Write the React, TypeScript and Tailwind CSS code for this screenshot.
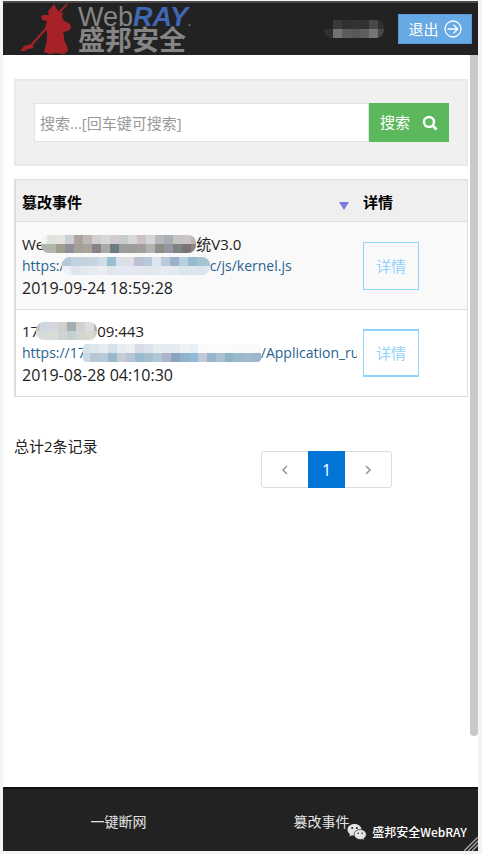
import React from "react";

const BODY_FONT = "font-['Open_Sans','Noto_Sans_CJK_SC',sans-serif]";

const CELL = 9;

type MosaicProps = {
  id: string;
  width: number;
  height: number;
  shift?: number;
  rows: string[][];
  radius?: number;
  className?: string;
};

/** Pixelated block that hides private text. */
function Mosaic({ id, width, height, shift = 0, rows, radius = 8, className = "" }: MosaicProps) {
  return (
    <svg
      width={width}
      height={height}
      className={`relative block shrink-0 ${className}`}
      aria-hidden="true"
      shapeRendering="crispEdges"
    >
      <clipPath id={id}>
        <rect width={width} height={height} rx={radius} />
      </clipPath>
      <g clipPath={`url(#${id})`}>
        {rows.map((row, y) =>
          row.map((fill, x) => (
            <rect key={`${x}-${y}`} x={x * CELL - shift} y={y * CELL} width={CELL} height={CELL + 1} fill={fill} />
          )),
        )}
      </g>
    </svg>
  );
}

const userRows = [
  ["#222222", "#3a3a3a", "#303030", "#333333", "#313131", "#484848", "#303030"],
  ["#303030", "#717171", "#5c5c5c", "#585858", "#5e5e5e", "#757575", "#484848"],
];

const titleRows = [
  ["#f0f3ef", "#dde4dc", "#e4e4e2", "#cccfd6", "#b0a29f", "#bdb9b7", "#d2d0cf", "#d5d8d7", "#d1cad2", "#c8cdcb", "#d5d8d6", "#cec1c8", "#d3d6d5", "#b6b8c0", "#a8b0b2", "#c5c3c6", "#cbc5c6", "#bdb5b5"],
  ["#aeb3ae", "#b2b5ac", "#9f9f90", "#8f9099", "#a5a098", "#a8a498", "#88838a", "#aaa8a9", "#6c7a82", "#9d9d9e", "#9b9b9c", "#a09f98", "#b3b3b6", "#8e8e85", "#9697a2", "#7c8384", "#7b7373", "#8b8585"],
];

const urlRows = [
  ["#b5c8d8", "#c2d3df", "#c4d2dd", "#c7d3df", "#d0dde7", "#9bbfd2", "#d5e0e8", "#dddde3", "#bdbfd4", "#b6c8d9", "#dfe5ec", "#b9cbdb", "#9bb0c9", "#b7d0df", "#98bace", "#a6c3d2", "#aac2d0", "#c5d6e0"],
  ["#edf0f5", "#dfe5ee", "#e4e8ef", "#e6ebf1", "#eaedf2", "#e1e6ed", "#e2e9f0", "#e3e9f0", "#e6e9ef", "#e0e6ec", "#e3e7ee", "#e7eaf0", "#e2e9ef", "#dde5ec", "#dce6ee", "#d9e4ed", "#dfe7ed", "#e7edf1"],
];

const ipRows = [
  ["#c3c7c9", "#d0d6df", "#d4d7e1", "#d0d0cf", "#a3b0b3", "#d6d0cd", "#dedde1", "#b0afae"],
  ["#d9dddc", "#d6dcd8", "#d8ddd9", "#cfd3d2", "#c2cfcd", "#cfd6d5", "#d7d9cf", "#cecfcb"],
];

const longUrlRows = [
  ["#d6e3ea", "#dfe7ee", "#e7ecf1", "#d6e1ea", "#e8edf1", "#edf0f3", "#d5dce8", "#dae2eb", "#e8edf1", "#e4ecf2", "#e7ebf3", "#f0f2f6", "#e9f0f5", "#f8fafb", "#fafbfc", "#fafbfb", "#fbfbfb", "#fafafa", "#fafafa", "#fafafa"],
  ["#c8d9e2", "#b9c4d7", "#b8cad9", "#96b9cf", "#c7cbd6", "#b6c3d3", "#9abbd0", "#a4bed0", "#b0c6d6", "#abb6cb", "#8ba4c1", "#90b2cd", "#90bad6", "#c3c9d7", "#99b5cb", "#a8c0d1", "#8fb4c6", "#98b9ce", "#a0bad0", "#9eb5cf"],
];

function Warrior() {
  return (
    <svg width="52" height="52" viewBox="0 0 52 52" className="shrink-0" aria-hidden="true" fill="#a62226">
      <path d="M47 0 48 1 40 10 38 9Z" />
      <path d="M34 1 36 5 39 9 43 10 42 14 44 18 50 21 51 25 48 28 43 29 44 33 44 37 47 43 48 48 44 51 36 50 30 51 24 49 26 42 27 36 27 29 25 25 27 18 22 17 21 13 24 12 29 12 28 8 31 5Z" />
      <path d="m26 24 1 2-14 16v3l-5 1-3 2H0l4-5 7-2Z" />
    </svg>
  );
}

function ExitIcon() {
  return (
    <svg width="18" height="18" viewBox="0 0 18 18" fill="none" stroke="white" strokeWidth="1.3" aria-hidden="true">
      <circle cx="9" cy="9" r="8" />
      <path d="M3.5 9h10M9.5 4.8 13.7 9l-4.2 4.2" />
    </svg>
  );
}

function SearchIcon() {
  return (
    <svg width="16" height="16" viewBox="0 0 16 16" fill="none" stroke="white" strokeWidth="2.4" aria-hidden="true">
      <circle cx="7" cy="7" r="5" />
      <path d="m10.6 10.6 4 4" strokeWidth="2.8" />
    </svg>
  );
}

function WeChatIcon() {
  return (
    <svg width="20" height="18" viewBox="0 0 20 18" fill="#e4e4e4" aria-hidden="true">
      <path d="M7.5 1C3.4 1 .5 3.6.5 6.8c0 1.9 1 3.4 2.5 4.5l-.7 2.2 2.6-1.3c.8.2 1.6.4 2.6.4 4.1 0 7-2.6 7-5.8S11.6 1 7.5 1Z" />
      <path
        d="M13.2 6.5c-3.3 0-6 2.2-6 5s2.7 5 6 5c.7 0 1.4-.1 2-.3l2.2 1.2-.6-1.9c1.5-.9 2.5-2.3 2.5-4 0-2.8-2.8-5-6.1-5Z"
        stroke="#222"
        strokeWidth=".7"
      />
      <g fill="#222">
        <circle cx="5.2" cy="5" r="1" />
        <circle cx="9.8" cy="5" r="1" />
        <circle cx="11.2" cy="10.2" r=".8" />
        <circle cx="15.2" cy="10.2" r=".8" />
      </g>
    </svg>
  );
}

function Chevron({ d }: { d: string }) {
  return (
    <svg width="8" height="10" viewBox="0 0 8 10" fill="none" stroke="#999" strokeWidth="1.6" aria-hidden="true">
      <path d={d} />
    </svg>
  );
}

function DetailButton({ thick = false }: { thick?: boolean }) {
  return (
    <button
      type="button"
      className={`block h-12 w-14 border-[#8bd6fb] text-[15px] text-[#8fd2fd] ${thick ? "border-x border-y-2" : "border"}`}
    >
      详情
    </button>
  );
}

export default function App() {
  return (
    <div className={`flex min-h-screen flex-col bg-[#f4f4f4] pt-px pr-1 pb-[3px] pl-[3px] ${BODY_FONT} text-[#222]`}>
      <div className="relative flex flex-1 flex-col bg-white">
        <header className="flex h-[54px] items-center border-t-2 border-[#4a4a4a] bg-[#222] pr-[6px] pl-[17px]">
          <Warrior />
          <div className="ml-[6px] font-['Liberation_Sans','Noto_Sans_CJK_SC',sans-serif] font-bold whitespace-nowrap text-[#858585]">
            <div className="flex items-end text-[27px] leading-6">
              <span className="font-normal">Web</span>
              <span className="text-[#4066b4] italic">RAY</span>
              <span className="text-[10px] leading-3">.</span>
            </div>
            <div className="text-[27px] leading-6">盛邦安全</div>
          </div>
          <div className="ml-auto">
            <Mosaic id="user" width={60} height={18} rows={userRows} />
          </div>
          <button
            type="button"
            className="ml-[14px] flex h-[30px] w-[74px] shrink-0 items-center justify-center gap-[5px] border border-[#5b9bd5] bg-[#67a9e4] text-[15px] text-white"
          >
            退出
            <ExitIcon />
          </button>
        </header>

        <main className="flex-1 pt-6 pr-[10px] pl-[11px]">
          <form
            className="flex border-2 border-[#e9e9e9] bg-[#f0f0f0] py-[22px] pr-[17px] pl-[18px]"
            onSubmit={(e) => e.preventDefault()}
          >
            <input
              type="search"
              aria-label="搜索"
              placeholder="搜索...[回车键可搜索]"
              className="h-[39px] min-w-0 flex-1 border border-[#e3e3e3] bg-white px-[5px] text-[15px] outline-none placeholder:text-[#999]"
            />
            <button
              type="submit"
              className="flex h-[39px] w-20 items-center justify-center gap-3 bg-[#5cb85c] text-[15px] text-white"
            >
              搜索
              <SearchIcon />
            </button>
          </form>

          <table className="mt-[13px] w-full table-fixed border-separate border-spacing-0 border border-l-2 border-[#dedede]">
            <colgroup>
              <col />
              <col className="w-[110px]" />
            </colgroup>
            <thead>
              <tr className="h-[42px] bg-[#efefef] text-left text-[15px] text-black">
                <th className="border-b border-[#dedede] pt-[3px] pr-2 pl-[6px]">
                  <div className="flex items-center justify-between">
                    篡改事件
                    <svg width="10" height="8" viewBox="0 0 10 8" className="mt-2" aria-hidden="true">
                      <path d="M0 0h10L5 8Z" fill="#7b7be0" />
                    </svg>
                  </div>
                </th>
                <th className="border-b border-[#dedede] pt-[3px] pl-[6px]">详情</th>
              </tr>
            </thead>
            <tbody className="text-[15px] leading-[22px] whitespace-nowrap">
              <tr className="h-[88px] bg-[#f9f9f9]">
                <td className="border-b border-[#dedede] pl-[6px]">
                  <div className="flex items-center">
                    <span>We</span>
                    <Mosaic id="title" width={155} height={18} shift={3} rows={titleRows} className="-ml-[3px]" />
                    <span>统V3.0</span>
                  </div>
                  <a href="#kernel" className="flex items-center text-sm leading-[22px] text-[#27638f]">
                    <span>https:/</span>
                    <Mosaic id="url" width={148} height={18} rows={urlRows} className="-ml-[3px]" />
                    <span>c/js/kernel.js</span>
                  </a>
                  <div className="text-base leading-[22px]">2019-09-24 18:59:28</div>
                </td>
                <td className="border-b border-[#dedede] pl-[6px]">
                  <DetailButton />
                </td>
              </tr>
              <tr className="h-[86px]">
                <td className="pl-[6px]">
                  <div className="flex items-center">
                    <span>17</span>
                    <Mosaic id="ip" width={61} height={18} shift={5} rows={ipRows} className="-ml-[3px]" />
                    <span>09:443</span>
                  </div>
                  <a
                    href="#application"
                    className="flex items-center overflow-hidden text-sm leading-[22px] text-[#27638f]"
                  >
                    <span>https://17</span>
                    <Mosaic
                      id="long-url"
                      width={178}
                      height={18}
                      shift={2}
                      rows={longUrlRows}
                      radius={4}
                      className="-ml-[3px]"
                    />
                    <span>/Application_ru</span>
                  </a>
                  <div className="text-base leading-[22px]">2019-08-28 04:10:30</div>
                </td>
                <td className="pl-[6px]">
                  <DetailButton thick />
                </td>
              </tr>
            </tbody>
          </table>

          <div className="mt-[37px] flex items-start justify-between pr-[76px]">
            <p className="text-[15px] leading-6">总计2条记录</p>
            <nav aria-label="分页" className="mt-[17px] flex h-[37px] w-[131px] rounded-[3px] border border-[#ddd]">
              <button type="button" aria-label="上一页" className="flex flex-1 items-center justify-center">
                <Chevron d="M6 1 2 5l4 4" />
              </button>
              <button type="button" aria-current="page" className="-my-px w-[37px] bg-[#0275d8] text-base text-white">
                1
              </button>
              <button type="button" aria-label="下一页" className="flex flex-1 items-center justify-center">
                <Chevron d="m2 1 4 4-4 4" />
              </button>
            </nav>
          </div>
        </main>

        <footer className="relative flex h-16 items-center border-t-2 border-[#111] bg-[#222] pt-1 pr-[55px] pl-[14px] text-sm text-[#e2e2e2]">
          <button type="button" className="flex-1">
            一键断网
          </button>
          <button type="button" className="flex-1">
            篡改事件
          </button>
          <div className="absolute right-[11px] bottom-[10px] flex items-center gap-[5px] font-['Noto_Sans_CJK_SC',sans-serif] text-xs leading-[18px] font-medium text-white">
            <WeChatIcon />
            盛邦安全WebRAY
          </div>
          <svg width="14" height="14" viewBox="0 0 14 14" className="absolute right-0 bottom-0" stroke="#aaa" strokeWidth="1.3" aria-hidden="true">
            <path d="M0 14 14 0M4 14 14 4M8 14l6-6" />
          </svg>
        </footer>

        <div className="absolute top-[54px] right-0 bottom-[115px] w-2 rounded-b bg-[#c9c9c9]" />
      </div>
    </div>
  );
}
